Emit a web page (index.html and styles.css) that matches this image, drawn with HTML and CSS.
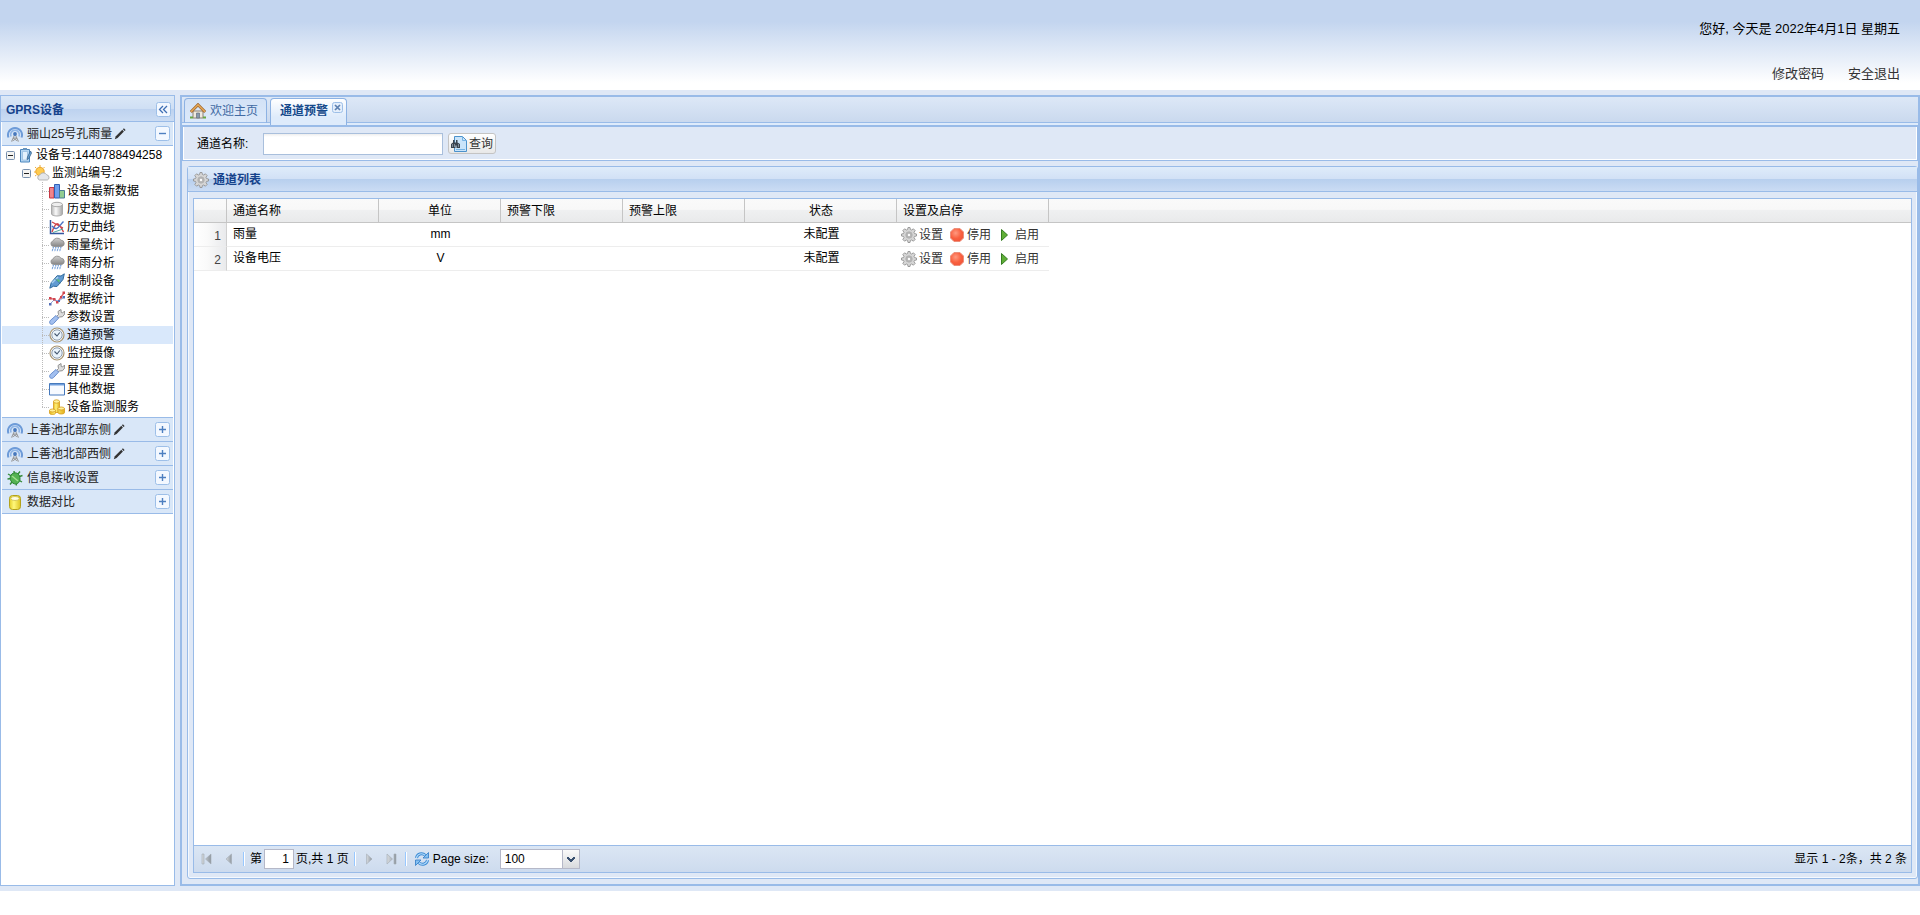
FILE: index.html
```html
<!DOCTYPE html>
<html lang="zh-CN">
<head>
<meta charset="utf-8">
<title>通道预警</title>
<link rel="stylesheet" href="styles.css">
</head>
<body>
<svg class="defs" aria-hidden="true">
  <defs>
    <linearGradient id="grey" x1="0" y1="0" x2="1" y2="0"><stop offset="0" stop-color="#b5b5b5"/><stop offset=".4" stop-color="#fafafa"/><stop offset="1" stop-color="#a6a6a6"/></linearGradient>
    <linearGradient id="cloudfill" x1="0" y1="0" x2="0" y2="1"><stop offset="0" stop-color="#d2d2d2"/><stop offset="1" stop-color="#858585"/></linearGradient>
    <linearGradient id="gold" x1="0" y1="0" x2="1" y2="0"><stop offset="0" stop-color="#e8b923"/><stop offset=".4" stop-color="#fff27a"/><stop offset="1" stop-color="#e3ae1c"/></linearGradient>
    <linearGradient id="lemon" x1="0" y1="0" x2="1" y2="0"><stop offset="0" stop-color="#e4cf2a"/><stop offset=".4" stop-color="#fff87c"/><stop offset="1" stop-color="#dcc421"/></linearGradient>
    <linearGradient id="navfill" x1="0" y1="0" x2="1" y2="0"><stop offset="0" stop-color="#d8dce0"/><stop offset="1" stop-color="#8f979f"/></linearGradient>
    <radialGradient id="redfill" cx=".4" cy=".35" r=".7"><stop offset="0" stop-color="#ff9a80"/><stop offset=".6" stop-color="#f9603f"/><stop offset="1" stop-color="#f0553a"/></radialGradient>
  </defs>
  <symbol id="antenna" viewBox="0 0 16 16">
    <path d="M1.500 11.500A7 7 0 1 1 14.500 11.500" fill="none" stroke="#6d9bd8" stroke-width="2"/>
    <path d="M4 10.500A4.400 4.400 0 1 1 12 10.500" fill="none" stroke="#8fb5e6" stroke-width="1.700"/>
    <path d="M8 8L4.500 15.500M8 8l3.500 7.500M6 12h4M5.500 15l4.500-3M10.500 15L6 12" fill="none" stroke="#969696"/>
    <circle cx="8" cy="8" r="1.900" fill="#4678bd"/>
  </symbol>
  <symbol id="pencil" viewBox="0 0 12 12">
    <path d="M.8 11.200l1-3L8.300 1.800l1.600 1.600-6.300 6.600z" fill="#333"/><path d="M8.900 1.200l1-1 1.700 1.700-1 1z" fill="#333"/>
  </symbol>
  <symbol id="device" viewBox="0 0 16 16">
    <path d="M2.500 2.500h9v12.500h-9z" fill="#b5d6f2" stroke="#4b86bd"/><path d="M4.500 4.500h5v8.500h-5z" fill="#e3f1fc" stroke="#8fb8dc" stroke-width=".7"/><path d="M5 1h4v2H5z" fill="#6793bd"/><path d="M12.500 4l-3 6-.5 2.500 1.800-1 2.700-5.500z" fill="#6ba4d5" stroke="#39658e" stroke-width=".8"/>
  </symbol>
  <symbol id="weather" viewBox="0 0 16 16">
    <path d="M6 0v2M1 2l1.500 1.400M0 7h2M10.500 2L9.400 3.300M1 11l1.500-1" stroke="#efae32"/><circle cx="6" cy="6.500" r="4.200" fill="#ffcb4f" stroke="#eba42c"/><path d="M5.500 15a2.600 2.600 0 0 1 .2-5 4 4 0 0 1 7-.2 2.700 2.700 0 0 1 .6 5.200z" fill="#e4e6ea" stroke="#a5a5a5" stroke-width=".8"/>
  </symbol>
  <symbol id="bars" viewBox="0 0 16 16">
    <path d="M.5 4.500H5V15H.5z" fill="#f0858c" stroke="#c63945"/><path d="M5.500 1.500h5V15h-5z" fill="#6f9fee" stroke="#315fb5"/><path d="M10.500 7.500h5V15h-5z" fill="#91cc91" stroke="#4b7c96"/>
  </symbol>
  <symbol id="cylinder" viewBox="0 0 16 16">
    <path d="M2.500 3.500v9.500c0 1 2.500 2 5.500 2s5.500-1 5.500-2V3.500z" fill="url(#grey)" stroke="#aaa"/><ellipse cx="8" cy="3.500" rx="5.500" ry="2.200" fill="#eee" stroke="#aaa"/>
  </symbol>
  <symbol id="curve" viewBox="0 0 16 16">
    <path d="M1.500 1v13.500H15" fill="none" stroke="#3358a0" stroke-width="1.500"/><path d="M3 13C7 2 9 2 14.500 13M3 3l11 6" fill="none" stroke="#cf454b" stroke-width="1.400"/><path d="M3 7c5 6 7 0 11.500-4.500" fill="none" stroke="#4972c4" stroke-width="1.400"/><path d="M4 13.500L14 10" stroke="#54a7a0"/>
  </symbol>
  <symbol id="rain" viewBox="0 0 16 16">
    <path d="M4.500 9.500a2.800 2.800 0 0 1-.5-5.500 4.500 4.500 0 0 1 8-.8 3.200 3.200 0 0 1 .8 6.300z" fill="url(#cloudfill)" stroke="#8a8a8a" stroke-width=".8"/><path d="M4.500 10L3 14.500M7 10l-1.500 4.500M9.500 10L8 14.500M12 10l-1.500 4.500" stroke="#6f9cd8" stroke-width="1.200" stroke-dasharray="1.600 .7"/>
  </symbol>
  <symbol id="plug" viewBox="0 0 16 16">
    <path d="M.8 15.200l1.400-5.500 6-7L12 3l3.300-2.200L14 6.500l-6 7-3.500-.3z" fill="#629bd2" stroke="#326c9f"/><path d="M3 10l6-6" stroke="#a9d0f0" stroke-width="1.500"/><path d="M6 5.500l5 5" stroke="#3e7f8c"/><path d="M8.500 6.500l2 2" stroke="#5ecb66" stroke-width="1.500"/>
  </symbol>
  <symbol id="stats" viewBox="0 0 16 16">
    <path d="M1 7.500L5 8l3.500 3L12 6l3-4" fill="none" stroke="#e0656c" stroke-width="1.300"/><path d="M1 13l4-4 5 1 5-4" fill="none" stroke="#8fa2d8"/><path d="M0 6h2.500v2.500H0zM4 7h2.500v2.500H4zM7 10h2.500v2.500H7zM11 5h2v2.500h-2zM13.500.5H16V3h-2.500z" fill="#d04650"/><path d="M0 12h2.500v2.500H0zM9 9h2v2H9zM13.500 5H16v2.500h-2.500z" fill="#5570b7"/>
  </symbol>
  <symbol id="wrench" viewBox="0 0 16 16">
    <path d="M7.500 7.500L9.500 5.500l-.5-3L12 .5l.2 3 1.600.4L15.500 2l.2 3-2.200 2.700-2.800.3L8.500 9z" fill="#ddd" stroke="#929292"/><path d="M7 6.500l2.600 2.600-5 5.400c-1.200 1.200-2.700 1-3.400.3s-.9-2.300.3-3.500z" fill="#a2bfef" stroke="#6a8fce"/>
  </symbol>
  <symbol id="clock" viewBox="0 0 16 16">
    <circle cx="8" cy="8" r="7" fill="#fff" stroke="#a89572" stroke-width="1.200"/><circle cx="8" cy="8" r="5.200" fill="#e9f3fc" stroke="#8c9aab"/><path d="M5.500 6.500L8 9l2.800-3.500" fill="none" stroke="#42566f" stroke-width="1.100"/>
  </symbol>
  <symbol id="window" viewBox="0 0 16 16">
    <path d="M.5 2.500h15v11.500H.500z" fill="#f7faff" stroke="#4679bc"/><path d="M1 3h14v1.500H1z" fill="#6f9edc"/>
  </symbol>
  <symbol id="coins" viewBox="0 0 16 16">
    <path d="M4.500 2.500v11h6v-11z" fill="url(#gold)" stroke="#d69c1c" stroke-width=".8"/><ellipse cx="7.500" cy="2.500" rx="3" ry="1.700" fill="#fff19a" stroke="#d69c1c" stroke-width=".8"/><path d="M.5 11.500v2.500c0 2 6 2 6 0v-2.500zM9 9.500v4c0 2 6.500 2 6.500 0v-4z" fill="url(#gold)" stroke="#d69c1c" stroke-width=".8"/><ellipse cx="3.500" cy="11.500" rx="3" ry="1.500" fill="#fff19a" stroke="#d69c1c" stroke-width=".8"/><ellipse cx="12.200" cy="9.500" rx="3.200" ry="1.500" fill="#fff19a" stroke="#d69c1c" stroke-width=".8"/>
  </symbol>
  <symbol id="bug" viewBox="0 0 16 16">
    <path d="M8 8L1 4M8 8L.500 9M8 8l-5 6.500M8 8l-1-7M8 8l5-6.500M8 8l7.500-2.500M8 8l7 4M8 8l1.500 7.500" stroke="#348b38" stroke-width="1.400"/><path d="M4 5c2-3 7-3 8.500 1s-.5 8-4 8S1.500 9 4 5z" fill="#54b252" stroke="#2d8534"/><path d="M5 6l6 5" stroke="#a2e08d" stroke-width="1.500"/>
  </symbol>
  <symbol id="database" viewBox="0 0 16 16">
    <rect x="2.500" y="1.500" width="11" height="14" rx="3" fill="url(#lemon)" stroke="#b3a21c"/><ellipse cx="8" cy="4.500" rx="4.200" ry="2" fill="#fffde0" stroke="#c7b73d" stroke-width=".7"/>
  </symbol>
  <symbol id="home" viewBox="0 0 16 16">
    <path d="M3 8h10v7H3z" fill="#eee9df" stroke="#8e8170"/><path d="M6.500 10h3v5h-3z" fill="#8798ad" stroke="#66707c" stroke-width=".7"/><path d="M.8 9L8 1.800 15.200 9" fill="none" stroke="#9d6832" stroke-width="3"/><path d="M1 8.700L8 1.800l7 6.900" fill="none" stroke="#e6a756" stroke-width="1.600"/><path d="M0 14.500h3M13 14.500h3" stroke="#68a643" stroke-width="2"/>
  </symbol>
  <symbol id="gear" viewBox="0 0 16 16">
    <path d="M7 .5h2l.4 2 1.300.5L12.400 1.800l1.800 1.800L13 5.300l.5 1.300 2 .4v2l-2 .4-.5 1.300 1.200 1.700-1.800 1.800-1.700-1.200-1.300.5-.4 2H7l-.4-2-1.300-.5-1.700 1.200-1.800-1.800L3 10.700l-.5-1.300-2-.4V7l2-.4L3 5.300 1.800 3.600l1.800-1.800L5.300 3l1.300-.5z" fill="#d6d6d6" stroke="#949494" stroke-width=".9"/><circle cx="8" cy="8" r="3.200" fill="#c2c2c2" stroke="#aaa" stroke-width=".8"/><circle cx="8" cy="8" r="1.900" fill="#fafafa" stroke="#929292" stroke-width=".7"/>
  </symbol>
  <symbol id="stop" viewBox="0 0 16 16">
    <path d="M5 1.500h6L14.500 5v6L11 14.500H5L1.500 11V5z" fill="url(#redfill)" stroke="#ec8f7b"/>
  </symbol>
  <symbol id="play" viewBox="0 0 16 16"><path d="M4.500 2.500v11l6-5.500z" fill="#5fae36" stroke="#357d21"/></symbol>
  <symbol id="search" viewBox="0 0 16 16">
    <path d="M3.500.5h8l4 4v11h-12z" fill="#c9e4fa" stroke="#4c92cc"/><path d="M11.500.5v4h4M5 13.500h9" fill="none" stroke="#76b3e4"/><path d="M2 4h1.500v2.500H5V4h1.500v2.500L9 8v4H5.500V9.500h-1V12H0V8l2-1.500z" fill="#38434f"/><path d="M1.500 8v3M7.500 8v3M3.500 8v3" stroke="#9cabb8" stroke-width=".7"/>
  </symbol>
  <symbol id="refresh" viewBox="0 0 16 16">
    <path d="M2.500 7C3 3 8 1.200 11.500 4.500M13.500 9c-.5 4-5.500 5.800-9 2.500" fill="none" stroke="#3d8bd4" stroke-width="3"/><path d="M2.500 7C3 3 8 1.200 11.500 4.500M13.500 9c-.5 4-5.500 5.800-9 2.500" fill="none" stroke="#b5dcfb" stroke-width="1.200"/><path d="M14.500 1.500V7H9zM1.500 14.500V9H7z" fill="#86c1f2" stroke="#2f7ac5" stroke-width=".8"/>
  </symbol>
  <symbol id="prev" viewBox="0 0 16 16"><path d="M10.500 3v10L5 8z" fill="url(#navfill)" stroke="#a3abb3" stroke-width=".6"/></symbol>
  <symbol id="first" viewBox="0 0 16 16"><path d="M3 3h2v10H3zM12 3v10L6.500 8z" fill="url(#navfill)" stroke="#a3abb3" stroke-width=".6"/></symbol>
  <symbol id="next" viewBox="0 0 16 16"><path d="M5.500 3v10L11 8z" fill="url(#navfill)" stroke="#a3abb3" stroke-width=".6"/></symbol>
  <symbol id="last" viewBox="0 0 16 16"><path d="M11 3h2v10h-2zM4 3v10l5.500-5z" fill="url(#navfill)" stroke="#a3abb3" stroke-width=".6"/></symbol>
  <symbol id="plus" viewBox="0 0 15 15"><rect x=".5" y=".5" width="14" height="14" rx="2" fill="#f3f8ff" stroke="#9dbfe8"/><path d="M4 7.500h7M7.500 4v7" stroke="#4d7fc0" stroke-width="1.400"/></symbol>
  <symbol id="minus" viewBox="0 0 15 15"><rect x=".5" y=".5" width="14" height="14" rx="2" fill="#f3f8ff" stroke="#9dbfe8"/><path d="M4 7.500h7" stroke="#4d7fc0" stroke-width="1.400"/></symbol>
  <symbol id="collapse" viewBox="0 0 15 15"><rect x=".5" y=".5" width="14" height="14" rx="2" fill="#f3f8ff" stroke="#9dbfe8"/><path d="M7 4L3.500 7.500 7 11M11 4L7.500 7.500 11 11" fill="none" stroke="#3f6fb3" stroke-width="1.300"/></symbol>
  <symbol id="close" viewBox="0 0 11 11"><rect x=".5" y=".5" width="10" height="10" rx="2" fill="#e4eefb" stroke="#9dbfe8"/><path d="M3 3l5 5M8 3L3 8" stroke="#5d80b0" stroke-width="1.700"/></symbol>
  <symbol id="node" viewBox="0 0 16 16"><rect x="4.500" y="4.500" width="8" height="8" rx="1" fill="#f4f4f2" stroke="#7890ad"/><path d="M6 8.500h5" stroke="#222"/></symbol>
</svg>

<header class="banner">
  <p class="greeting">您好, 今天是 2022年4月1日 星期五</p>
  <nav class="account"><a href="#">修改密码</a><a href="#">安全退出</a></nav>
</header>

<div class="workspace">
  <aside class="sidebar">
    <div class="sidebar-title"><h2>GPRS设备</h2><button class="tool" aria-label="收起"><svg><use href="#collapse"/></svg></button></div>
    <div class="section"><svg class="icon"><use href="#antenna"/></svg><span>骊山25号孔雨量</span><svg class="edit"><use href="#pencil"/></svg><button class="tool" aria-label="折叠"><svg><use href="#minus"/></svg></button></div>
    <ul class="tree">
      <li><a href="#"><svg class="icon"><use href="#node"/></svg><svg class="icon"><use href="#device"/></svg><span>设备号:1440788494258</span></a>
        <ul class="branch">
          <li><a href="#"><svg class="icon"><use href="#node"/></svg><svg class="icon"><use href="#weather"/></svg><span>监测站编号:2</span></a>
            <ul class="leaves">
              <li><a href="#"><svg class="icon"><use href="#bars"/></svg><span>设备最新数据</span></a></li>
              <li><a href="#"><svg class="icon"><use href="#cylinder"/></svg><span>历史数据</span></a></li>
              <li><a href="#"><svg class="icon"><use href="#curve"/></svg><span>历史曲线</span></a></li>
              <li><a href="#"><svg class="icon"><use href="#rain"/></svg><span>雨量统计</span></a></li>
              <li><a href="#"><svg class="icon"><use href="#rain"/></svg><span>降雨分析</span></a></li>
              <li><a href="#"><svg class="icon"><use href="#plug"/></svg><span>控制设备</span></a></li>
              <li><a href="#"><svg class="icon"><use href="#stats"/></svg><span>数据统计</span></a></li>
              <li><a href="#"><svg class="icon"><use href="#wrench"/></svg><span>参数设置</span></a></li>
              <li class="selected"><a href="#"><svg class="icon"><use href="#clock"/></svg><span>通道预警</span></a></li>
              <li><a href="#"><svg class="icon"><use href="#clock"/></svg><span>监控摄像</span></a></li>
              <li><a href="#"><svg class="icon"><use href="#wrench"/></svg><span>屏显设置</span></a></li>
              <li><a href="#"><svg class="icon"><use href="#window"/></svg><span>其他数据</span></a></li>
              <li><a href="#"><svg class="icon"><use href="#coins"/></svg><span>设备监测服务</span></a></li>
            </ul>
          </li>
        </ul>
      </li>
    </ul>
    <div class="section ruled"><svg class="icon"><use href="#antenna"/></svg><span>上善池北部东侧</span><svg class="edit"><use href="#pencil"/></svg><button class="tool" aria-label="展开"><svg><use href="#plus"/></svg></button></div>
    <div class="section"><svg class="icon"><use href="#antenna"/></svg><span>上善池北部西侧</span><svg class="edit"><use href="#pencil"/></svg><button class="tool" aria-label="展开"><svg><use href="#plus"/></svg></button></div>
    <div class="section"><svg class="icon"><use href="#bug"/></svg><span>信息接收设置</span><button class="tool" aria-label="展开"><svg><use href="#plus"/></svg></button></div>
    <div class="section"><svg class="icon"><use href="#database"/></svg><span>数据对比</span><button class="tool" aria-label="展开"><svg><use href="#plus"/></svg></button></div>
  </aside>

  <main class="content">
    <div class="tabs">
      <button class="tab"><svg class="icon"><use href="#home"/></svg>欢迎主页</button>
      <div class="tab active"><button class="tab-label">通道预警</button><button class="tab-close" aria-label="关闭"><svg><use href="#close"/></svg></button></div>
    </div>
    <form class="search">
      <label for="channel">通道名称:</label>
      <input id="channel" type="text">
      <button type="button" class="query"><svg class="icon"><use href="#search"/></svg>查询</button>
    </form>
    <section class="panel">
      <h2 class="panel-title"><svg class="icon"><use href="#gear"/></svg>通道列表</h2>
      <div class="grid">
        <div class="grid-body">
          <table>
            <colgroup><col class="c-num"><col class="c-wide"><col class="c-mid"><col class="c-mid"><col class="c-mid"><col class="c-wide"><col class="c-wide"><col></colgroup>
            <thead><tr><th></th><th>通道名称</th><th class="center">单位</th><th>预警下限</th><th>预警上限</th><th class="center">状态</th><th>设置及启停</th><th class="rest"></th></tr></thead>
            <tbody>
              <tr><td class="num">1</td><td>雨量</td><td class="center">mm</td><td></td><td></td><td class="center">未配置</td><td><div class="actions"><button><svg class="icon"><use href="#gear"/></svg>设置</button><button><svg class="icon"><use href="#stop"/></svg>停用</button><button><svg class="icon"><use href="#play"/></svg>启用</button></div></td><td class="rest"></td></tr>
              <tr><td class="num">2</td><td>设备电压</td><td class="center">V</td><td></td><td></td><td class="center">未配置</td><td><div class="actions"><button><svg class="icon"><use href="#gear"/></svg>设置</button><button><svg class="icon"><use href="#stop"/></svg>停用</button><button><svg class="icon"><use href="#play"/></svg>启用</button></div></td><td class="rest"></td></tr>
            </tbody>
          </table>
        </div>
        <footer class="paging">
          <button class="nav" aria-label="首页"><svg class="icon"><use href="#first"/></svg></button>
          <button class="nav" aria-label="上一页"><svg class="icon"><use href="#prev"/></svg></button>
          <i class="sep"></i>
          <label for="page">第</label><input id="page" type="text" value="1"><span class="pages">页,共 1 页</span>
          <i class="sep"></i>
          <button class="nav" aria-label="下一页"><svg class="icon"><use href="#next"/></svg></button>
          <button class="nav" aria-label="末页"><svg class="icon"><use href="#last"/></svg></button>
          <i class="sep"></i>
          <button class="refresh" aria-label="刷新"><svg class="icon"><use href="#refresh"/></svg></button>
          <label for="size">Page size:</label>
          <select id="size"><option>100</option></select>
          <span class="summary">显示 1 - 2条，共 2 条</span>
        </footer>
      </div>
    </section>
  </main>
</div>
</body>
</html>
```
FILE: styles.css
```css
* { box-sizing: border-box; }

body {
  margin: 0;
  height: 100vh;
  padding-bottom: 24px;
  display: flex;
  flex-direction: column;
  background: #fff;
  color: #000;
  font: 12px/18px "Liberation Sans", "Noto Sans CJK SC", sans-serif;
}

button, input, select { font: inherit; color: inherit; margin: 0; }
button { border: 0; padding: 0; background: none; white-space: nowrap; }
a { color: inherit; text-decoration: none; }
h2, p, ul { margin: 0; padding: 0; }
ul { list-style: none; }
svg { display: block; flex: none; }
.defs { position: absolute; width: 0; height: 0; }
.icon { width: 16px; height: 16px; }

.banner {
  flex: none;
  height: 90px;
  padding: 19px 20px 0;
  display: flex;
  flex-direction: column;
  align-items: flex-end;
  gap: 25px;
  font-size: 13px;
  line-height: 20px;
  background: linear-gradient(#c3d5ef 0, #c3d5ef 24%, #fff 92%);
}
.account { display: flex; gap: 24px; color: #333; }

.workspace {
  flex: 1;
  min-height: 0;
  padding: 5px 0;
  display: flex;
  gap: 5px;
  background: #dfe8f6;
}

/* Device list */
.sidebar {
  width: 175px;
  flex: none;
  border: 1px solid #99bbe8;
  background: #fff;
}
.sidebar-title {
  height: 26px;
  padding: 2px 3px 0 5px;
  display: flex;
  align-items: center;
  justify-content: space-between;
  background: linear-gradient(#dbe8f7 0, #cfdff4 50%, #bdd2ef 52%, #cbdcf3 100%);
  border-bottom: 1px solid #99bbe8;
}
.sidebar-title h2 { font-size: 12px; color: #15428b; }
.tool, .tool svg { width: 15px; height: 15px; }
.section {
  height: 24px;
  margin: 0 1px;
  padding: 0 3px 0 5px;
  display: flex;
  align-items: center;
  gap: 4px;
  color: #222;
  background: #d9e7f8;
  border-bottom: 1px solid #99bbe8;
}
.section .tool { margin-left: auto; }
.section.ruled { height: 25px; border-top: 1px solid #99bbe8; }
.edit { width: 12px; height: 12px; margin-left: -2px; }

.tree { padding-bottom: 1px; }
.tree a { height: 18px; padding-left: 1px; display: flex; align-items: center; white-space: nowrap; }
.tree a span { margin-left: 2px; }
.tree .branch a { padding-left: 17px; }
.tree .leaves a {
  margin-left: 41px;
  padding-left: 0;
  background: repeating-linear-gradient(#bbb 0 1px, transparent 1px 2px) left top / 1px 18px no-repeat;
}
.tree .leaves li:last-child a { background-size: 1px 9px; }
.leaves a::before { content: ""; width: 7px; border-top: 1px dotted #bbb; }
.selected { margin: 0 1px; background: #d9e8fb; }
.tree .leaves .selected a { margin-left: 40px; }

/* Work area */
.content {
  flex: 1;
  min-width: 0;
  display: flex;
  flex-direction: column;
  border: 2px solid #99bbe8;
}
.tabs {
  flex: none;
  height: 30px;
  padding: 1px 2px 0;
  display: flex;
  gap: 3px;
  background: linear-gradient(#dde8f7 0, #cad9ee 25px, #99bbe8 25px, #99bbe8 26px, #deebfb 26px);
  border-bottom: 2px solid #99bbe8;
}
.tab {
  height: 25px;
  padding: 0 8px 0 5px;
  display: flex;
  align-items: center;
  gap: 4px;
  color: #416aa3;
  background: linear-gradient(#d3e2f6, #dce9fa);
  border: 1px solid #8db2e3;
  border-bottom-color: #99bbe8;
  border-radius: 4px 4px 0 0;
}
.tab.active {
  height: 27px;
  padding: 0 3px 2px 9px;
  background: linear-gradient(#fff, #deebfb 70%);
  border-bottom: 0;
  align-items: flex-start;
}
.tab-label { height: 24px; font-weight: bold; color: #15498b; }
.tab-close, .tab-close svg { width: 11px; height: 11px; }
.tab-close { margin-top: 3px; }

.search {
  flex: none;
  height: 34px;
  padding: 0 0 0 14px;
  display: flex;
  align-items: center;
  border: 1px solid #99bbe8;
  border-top: 0;
  box-shadow: inset -1px -1px #fff, inset 1px 0 #fff;
}
.search label { width: 66px; }
.search input {
  width: 180px;
  height: 22px;
  padding: 1px 4px;
  border: 1px solid #a9bfdc;
  background: linear-gradient(#eee, #fff 3px);
}
.query {
  height: 21px;
  margin-left: 5px;
  padding: 0 2px;
  display: flex;
  align-items: center;
  gap: 2px;
  color: #333;
  border: 1px solid #c4c4c4;
  border-radius: 3px;
  background: linear-gradient(#fff, #e8e8e8);
}

.panel {
  flex: 1;
  min-height: 0;
  margin: 5px 0 5px 5px;
  display: flex;
  flex-direction: column;
  border: 1px solid #99bbe8;
  border-radius: 3px;
  box-shadow: inset 0 0 0 1px #f4f9ff;
}
.panel-title {
  flex: none;
  height: 25px;
  padding: 1px 0 0 5px;
  display: flex;
  align-items: center;
  gap: 4px;
  font-size: 12px;
  color: #15428b;
  border-bottom: 1px solid #99bbe8;
  background: linear-gradient(#dfecfa 0, #d2e1f6 48%, #b7cfee 50%, #cbdcf4 100%);
}
.grid {
  flex: 1;
  min-height: 0;
  margin: 6px 5px 5px;
  display: flex;
  flex-direction: column;
  border: 1px solid #99bbe8;
  background: #fff;
}
.grid-body { flex: 1; min-height: 0; overflow: hidden; }
table { width: 100%; table-layout: fixed; border-collapse: separate; border-spacing: 0; }
.c-num { width: 33px; }
.c-mid { width: 122px; }
.c-wide { width: 152px; }
th, td { height: 24px; padding: 0 5px 2px 6px; text-align: left; font-weight: normal; line-height: 18px; white-space: nowrap; }
th {
  padding: 0 5px 0 6px;
  border-right: 1px solid #c5c5c5;
  border-bottom: 1px solid #c5c5c5;
  background: linear-gradient(#fafafa 0, #f8f8f8 45%, #eff0f1 50%, #e9eaeb 100%);
}
td { border-bottom: 1px solid #ededed; }
.center { text-align: center; }
td.num {
  padding: 2px 5px 0;
  text-align: right;
  color: #444;
  border-right: 1px solid #d0d0d0;
  background: linear-gradient(90deg, #fff, #fafafa 40%, #e9eaec);
}
.rest { border-right: 0; }
td.rest { border-bottom: 0; }
td:nth-child(7) { padding: 1px 0 0 4px; }
.actions { display: flex; gap: 6px; color: #333; }
.actions button { display: flex; align-items: center; gap: 2px; }

.paging {
  flex: none;
  height: 27px;
  padding: 0 4px 0 5px;
  display: flex;
  align-items: center;
  border-top: 1px solid #99bbe8;
  background: linear-gradient(#dbe6f4, #cddbee);
}
.nav { margin-right: 6px; }
.sep { width: 2px; height: 14px; margin: 0 5px 0 0; border-left: 1px solid #98c8ff; border-right: 1px solid #fff; }
#page { width: 30px; height: 20px; margin: 0 2px; padding: 1px 4px; text-align: right; border: 1px solid #b5b8c8; background: #fff; }
.pages { margin-right: 5px; }
.refresh { margin: 0 3px 0 2px; }
#size {
  width: 80px;
  height: 20px;
  margin-left: 11px;
  padding: 0 4px;
  appearance: none;
  border: 1px solid #b5b8c8;
  border-radius: 0;
  background:
    linear-gradient(45deg, transparent 38%, #39506f 38% 62%, transparent 62%) 66px 7px / 5px 5px no-repeat,
    linear-gradient(-45deg, transparent 38%, #39506f 38% 62%, transparent 62%) 69px 7px / 5px 5px no-repeat,
    linear-gradient(#b5b8c8, #b5b8c8) 61px 0 / 1px 18px no-repeat,
    linear-gradient(#fafafa, #d8dadd) 62px 0 / 16px 18px no-repeat,
    #fff;
}
.summary { margin-left: auto; }
```
